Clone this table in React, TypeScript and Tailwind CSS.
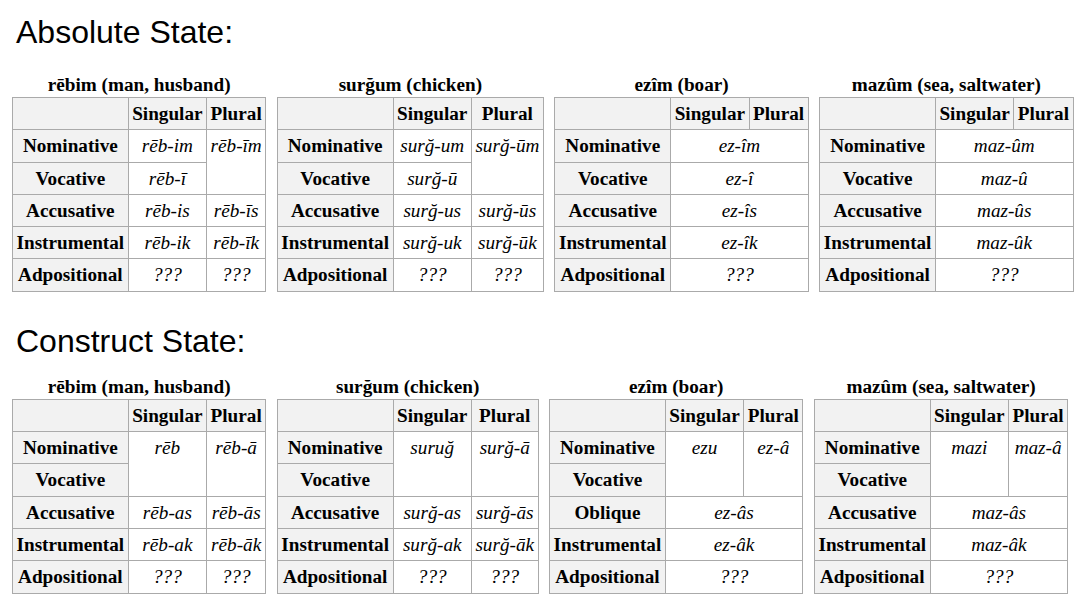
import React from 'react';

type Cell = { text: string; rowSpan?: number; colSpan?: number };
type Row = { label: string; cells: Cell[] };

interface DeclensionTableProps {
  caption: string;
  rows: Row[];
}

const DeclensionTable: React.FC<DeclensionTableProps> = ({ caption, rows }) => {
  return (
    <table className="shrink-0 border-collapse bg-white font-['Liberation_Serif'] text-[19.2px] text-black">
      <caption className="font-['Liberation_Serif'] font-bold leading-[24px] text-center">{caption}</caption>
      <tbody>
        <tr>
          <th className="border border-[#aaaaaa] bg-[#f2f2f2] px-[3.5px] py-[4px] leading-[23.3px]"></th>
          <th className="border border-[#aaaaaa] bg-[#f2f2f2] px-[3.5px] py-[4px] font-['Liberation_Serif'] leading-[23.3px] font-bold">
            Singular
          </th>
          <th className="border border-[#aaaaaa] bg-[#f2f2f2] px-[3.5px] py-[4px] font-['Liberation_Serif'] leading-[23.3px] font-bold">
            Plural
          </th>
        </tr>
        {rows.map((row) => (
          <tr key={row.label}>
            <th className="border border-[#aaaaaa] bg-[#f2f2f2] px-[3.5px] py-[4px] font-['Liberation_Serif'] leading-[23.3px] font-bold whitespace-nowrap">
              {row.label}
            </th>
            {row.cells.map((cell, i) => (
              <td
                key={i}
                rowSpan={cell.rowSpan}
                colSpan={cell.colSpan}
                className="border border-[#aaaaaa] px-[3.5px] py-[4px] font-['Liberation_Serif'] leading-[23.3px] text-center align-top italic whitespace-nowrap"
              >
                {cell.text}
              </td>
            ))}
          </tr>
        ))}
      </tbody>
    </table>
  );
};

const full = (text: string): Cell => ({ text, colSpan: 2 });

const absoluteTables: DeclensionTableProps[] = [
  {
    caption: 'rēbim (man, husband)',
    rows: [
      { label: 'Nominative', cells: [{ text: 'rēb-im' }, { text: 'rēb-īm', rowSpan: 2 }] },
      { label: 'Vocative', cells: [{ text: 'rēb-ī' }] },
      { label: 'Accusative', cells: [{ text: 'rēb-is' }, { text: 'rēb-īs' }] },
      { label: 'Instrumental', cells: [{ text: 'rēb-ik' }, { text: 'rēb-īk' }] },
      { label: 'Adpositional', cells: [{ text: '???' }, { text: '???' }] },
    ],
  },
  {
    caption: 'surğum (chicken)',
    rows: [
      { label: 'Nominative', cells: [{ text: 'surğ-um' }, { text: 'surğ-ūm', rowSpan: 2 }] },
      { label: 'Vocative', cells: [{ text: 'surğ-ū' }] },
      { label: 'Accusative', cells: [{ text: 'surğ-us' }, { text: 'surğ-ūs' }] },
      { label: 'Instrumental', cells: [{ text: 'surğ-uk' }, { text: 'surğ-ūk' }] },
      { label: 'Adpositional', cells: [{ text: '???' }, { text: '???' }] },
    ],
  },
  {
    caption: 'ezîm (boar)',
    rows: [
      { label: 'Nominative', cells: [full('ez-îm')] },
      { label: 'Vocative', cells: [full('ez-î')] },
      { label: 'Accusative', cells: [full('ez-îs')] },
      { label: 'Instrumental', cells: [full('ez-îk')] },
      { label: 'Adpositional', cells: [full('???')] },
    ],
  },
  {
    caption: 'mazûm (sea, saltwater)',
    rows: [
      { label: 'Nominative', cells: [full('maz-ûm')] },
      { label: 'Vocative', cells: [full('maz-û')] },
      { label: 'Accusative', cells: [full('maz-ûs')] },
      { label: 'Instrumental', cells: [full('maz-ûk')] },
      { label: 'Adpositional', cells: [full('???')] },
    ],
  },
];

const constructTables: DeclensionTableProps[] = [
  {
    caption: 'rēbim (man, husband)',
    rows: [
      { label: 'Nominative', cells: [{ text: 'rēb', rowSpan: 2 }, { text: 'rēb-ā', rowSpan: 2 }] },
      { label: 'Vocative', cells: [] },
      { label: 'Accusative', cells: [{ text: 'rēb-as' }, { text: 'rēb-ās' }] },
      { label: 'Instrumental', cells: [{ text: 'rēb-ak' }, { text: 'rēb-āk' }] },
      { label: 'Adpositional', cells: [{ text: '???' }, { text: '???' }] },
    ],
  },
  {
    caption: 'surğum (chicken)',
    rows: [
      { label: 'Nominative', cells: [{ text: 'suruğ', rowSpan: 2 }, { text: 'surğ-ā', rowSpan: 2 }] },
      { label: 'Vocative', cells: [] },
      { label: 'Accusative', cells: [{ text: 'surğ-as' }, { text: 'surğ-ās' }] },
      { label: 'Instrumental', cells: [{ text: 'surğ-ak' }, { text: 'surğ-āk' }] },
      { label: 'Adpositional', cells: [{ text: '???' }, { text: '???' }] },
    ],
  },
  {
    caption: 'ezîm (boar)',
    rows: [
      { label: 'Nominative', cells: [{ text: 'ezu', rowSpan: 2 }, { text: 'ez-â', rowSpan: 2 }] },
      { label: 'Vocative', cells: [] },
      { label: 'Oblique', cells: [full('ez-âs')] },
      { label: 'Instrumental', cells: [full('ez-âk')] },
      { label: 'Adpositional', cells: [full('???')] },
    ],
  },
  {
    caption: 'mazûm (sea, saltwater)',
    rows: [
      { label: 'Nominative', cells: [{ text: 'mazi', rowSpan: 2 }, { text: 'maz-â', rowSpan: 2 }] },
      { label: 'Vocative', cells: [] },
      { label: 'Accusative', cells: [full('maz-âs')] },
      { label: 'Instrumental', cells: [full('maz-âk')] },
      { label: 'Adpositional', cells: [full('???')] },
    ],
  },
];

export default function App() {
  return (
    <div className="min-h-screen bg-white pt-[14px] text-black">
      <h2 className="pl-[16px] font-['Liberation_Sans'] text-[32px] leading-[37px] font-normal">
        Absolute State:
      </h2>
      <div className="mt-[22px] flex items-start gap-[10.6px] pl-[12px] font-['Liberation_Serif']">
        {absoluteTables.map((t) => (
          <DeclensionTable key={t.caption} {...t} />
        ))}
      </div>

      <h2 className="mt-[31px] pl-[16px] font-['Liberation_Sans'] text-[32px] leading-[37px] font-normal">
        Construct State:
      </h2>
      <div className="mt-[15px] flex items-start gap-[10.6px] pl-[12px] font-['Liberation_Serif']">
        {constructTables.map((t) => (
          <DeclensionTable key={t.caption} {...t} />
        ))}
      </div>
    </div>
  );
}
